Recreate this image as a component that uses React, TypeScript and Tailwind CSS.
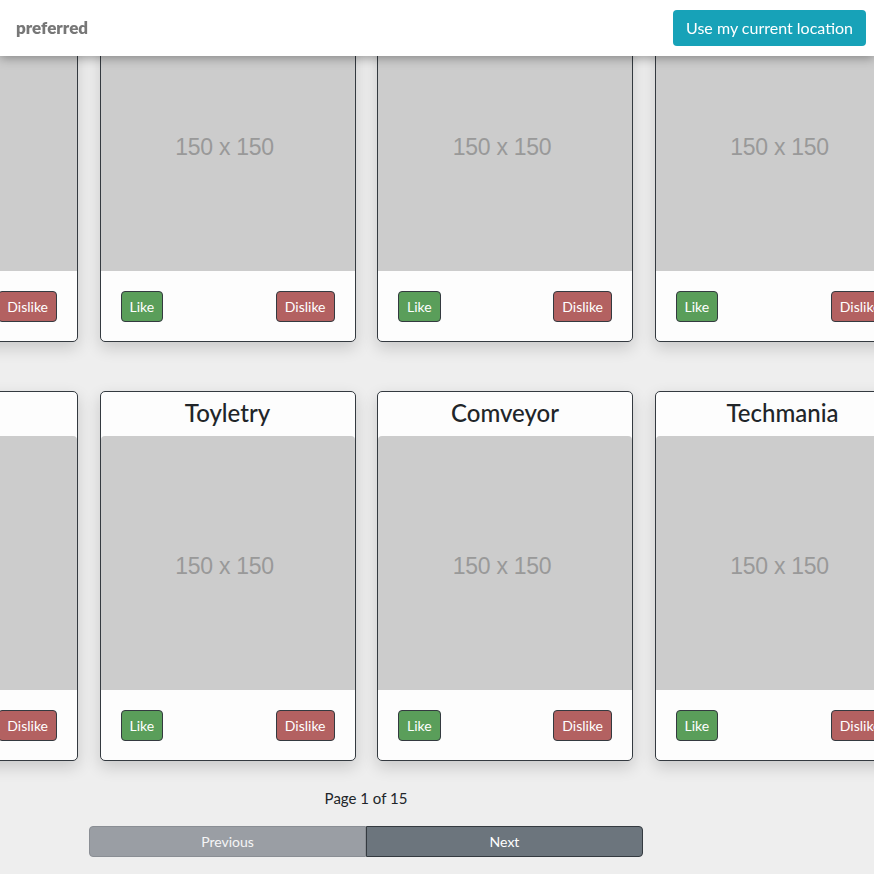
import React from "react";

type Item = { name: string };

const topRow: Item[] = [
  { name: "Brandly" },
  { name: "Gadgetry" },
  { name: "Snackful" },
  { name: "Zoomtech" },
];

const bottomRow: Item[] = [
  { name: "Fooderia" },
  { name: "Toyletry" },
  { name: "Comveyor" },
  { name: "Techmania" },
];

function Card({ item }: { item: Item }) {
  return (
    <div className="w-[256px] shrink-0 border border-[#343a40] rounded-[5px] bg-[#fdfdfd] shadow-[0_6px_16px_rgba(0,0,0,0.16)] flex flex-col">
      <div className="h-[44px] pb-[3px] flex items-center justify-center text-[24px] font-medium text-[#212529]">
        {item.name}
      </div>
      <div className="h-[254px] pt-[6px] pr-[6px] bg-[#cccccc] rounded-t-[4px] flex items-center justify-center">
        <span className="text-[23px] tracking-[-0.3px] text-[#999999] font-['Liberation_Sans',Arial,sans-serif]">
          150 x 150
        </span>
      </div>
      <div className="h-[70px] flex items-center justify-between px-[20px]">
        <button className="h-[31px] px-[8px] text-[14px] text-white bg-[#5a9e5a] border border-[#343a40] rounded-[4px]">
          Like
        </button>
        <button className="h-[31px] px-[8px] text-[14px] text-white bg-[#b36161] border border-[#343a40] rounded-[4px]">
          Dislike
        </button>
      </div>
    </div>
  );
}

export default function App() {
  return (
    <div className="relative h-[874px] w-full overflow-hidden bg-[#eeeeee] font-['Lato','Noto_Sans',sans-serif]">
      <header className="fixed top-0 inset-x-0 z-10 h-[56px] bg-white flex items-center justify-between pl-[16px] pr-[8px] shadow-[0_2px_10px_rgba(0,0,0,0.35)]">
        <span className="text-[17px] font-extrabold text-[#777777]">preferred</span>
        <button className="h-[36px] px-[13px] rounded-[4px] bg-[#17a2b8] text-white text-[16px]">
          Use my current location
        </button>
      </header>

      <main className="mt-[-28px] flex flex-col">
        <div className="flex gap-[21.5px] ml-[-178px]">
          {topRow.map((it) => (
            <Card key={it.name} item={it} />
          ))}
        </div>
        <div className="flex gap-[21.5px] ml-[-178px] mt-[49px]">
          {bottomRow.map((it) => (
            <Card key={it.name} item={it} />
          ))}
        </div>

        <div className="ml-[89px] w-[554px] flex flex-col">
          <p className="mt-[25px] text-center text-[15px] leading-[24px] text-[#212529]">
            Page 1 of 15
          </p>
          <div className="mt-[16px] flex h-[31px]">
            <button className="flex-1 bg-[#9a9ea4] text-[14px] text-white/90 border border-[#8a8e94] rounded-l-[4px]">
              Previous
            </button>
            <button className="flex-1 bg-[#6c757d] text-[14px] text-white border border-[#343a40] rounded-r-[4px]">
              Next
            </button>
          </div>
        </div>
      </main>
    </div>
  );
}
